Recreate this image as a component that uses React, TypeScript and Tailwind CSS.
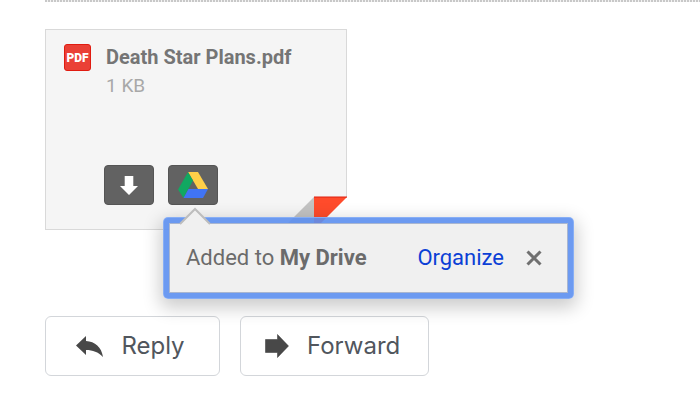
import React from 'react';

const PdfIcon = () => (
  <span className="flex size-[27px] shrink-0 items-center justify-center rounded-[3px] border border-[#e01b10] bg-[#ea4036] font-['Roboto',sans-serif] text-[12px] font-black leading-none text-white">
    PDF
  </span>
);

const DownloadIcon = () => (
  <svg viewBox="0 0 18 19" className="h-[19px] w-[18px]" fill="#fff" aria-hidden="true">
    <path d="M4.700 0h8.600v10H18l-9 9-9-9h4.700z" />
  </svg>
);

const DriveIcon = () => (
  <svg viewBox="0 0 30 26" className="h-[26px] w-[30px]" aria-hidden="true">
    <path d="M10 0h10l10 17H20z" fill="#ffcf48" />
    <path d="M10 0l5 8.500-9.500 17.500L0 17.500z" fill="#11a861" />
    <path d="M10.500 17H30l-5 9H5.500z" fill="#4074f5" />
  </svg>
);

const ReplyIcon = () => (
  <svg viewBox="0 0 27 21" className="h-[21px] w-[27px]" fill="#484848" aria-hidden="true">
    <path d="M0 9.500L10 0v5C19 5.500 25.500 11 27 21 22 16 17 14 10 14v5z" />
  </svg>
);

const ForwardIcon = () => (
  <svg viewBox="0 0 24 24" className="size-6" fill="#484848" stroke="#333" strokeWidth="0.500" aria-hidden="true">
    <path d="M.5 5.500h12V.5L23.500 12 12.500 23.500v-5H.5z" />
  </svg>
);

interface ActionButtonProps {
  label: string;
  icon: React.ReactNode;
}

const ActionButton: React.FC<ActionButtonProps> = ({ label, icon }) => (
  <button
    type="button"
    className="flex h-[60px] min-w-[175px] items-center justify-center gap-[18px] rounded-md border border-[#d3d6da] bg-white pl-6 pr-7 font-['Inter',sans-serif] text-2xl leading-7 text-[#51565d]"
  >
    {icon}
    {label}
  </button>
);

const DriveTooltip = () => (
  <div
    role="status"
    className="absolute left-[117px] top-[187px] w-[411px] rounded-[5px] border border-[#8fb3f6]/80 bg-[#5c8ff0]/90 p-[5px] shadow-[0_6px_18px_3px_rgba(0,0,0,0.2)]"
  >
    <div className="relative flex h-[70px] items-center border border-[#a9b6d0] bg-[#f0f0f0] pl-4 pr-[25px] text-[22px] leading-7 text-[#6b6b6b]">
      <svg viewBox="0 0 32 18" className="absolute -top-[17px] left-[9px] h-[18px] w-8" aria-hidden="true">
        <path d="M0 18L16 2l16 16z" fill="#f0f0f0" />
        <path d="M1 17L16 2l15 15" fill="none" stroke="#bdbdbd" strokeWidth="2" />
      </svg>
      <span>
        Added to <b className="font-bold">My Drive</b>
      </span>
      <a href="#organize" className="ml-auto text-[#0b3fd6]">
        Organize
      </a>
      <button type="button" aria-label="Close" className="ml-[22px]">
        <svg viewBox="0 0 16 16" className="size-4" stroke="#707070" strokeWidth="3" aria-hidden="true">
          <path d="M1.500 1.500l13 13M14.500 1.500l-13 13" />
        </svg>
      </button>
    </div>
  </div>
);

const AttachmentCard = () => (
  <section className="relative h-[201px] w-[302px] border border-[#d9d9d9] bg-[#f5f5f5] pl-[18px] pt-[13px]">
    <div className="flex gap-[15px]">
      <div className="pt-px">
        <PdfIcon />
      </div>
      <div>
        <h2 className="text-xl font-bold leading-7 text-[#757575]">Death Star Plans.pdf</h2>
        <p className="text-[19px] leading-[30px] text-[#a8a8a8]">1 KB</p>
      </div>
    </div>
    <div className="ml-10 mt-16 flex gap-[14px]">
      <button type="button" aria-label="Download" className="flex h-10 w-[50px] items-center justify-center rounded-[4px] border border-[#555] bg-[#626262]">
        <DownloadIcon />
      </button>
      <button type="button" aria-label="Add to Drive" className="flex h-10 w-[50px] items-center justify-center rounded-[4px] border border-[#555] bg-[#626262]">
        <DriveIcon />
      </button>
    </div>

    {/* folded corner */}
    <svg viewBox="0 0 66 34" className="absolute -bottom-px -right-px h-[34px] w-[66px]" aria-hidden="true">
      <path d="M66 1v33H33z" fill="#fff" />
      <path d="M33 1v33H0z" fill="#c3c3c3" />
      <path d="M33 1h33L33 34z" fill="#ff4b2b" />
      <path d="M33 1h33" stroke="#dd2010" />
    </svg>
    <DriveTooltip />
  </section>
);

export default function App() {
  return (
    <main className="min-h-screen bg-white pl-[45px] font-['Roboto',sans-serif]">
      <div className="h-0.5 bg-[repeating-linear-gradient(90deg,#c8c8c8_0_2px,#f3f3f3_2px_3px)]" />
      <div className="pt-[27px]">
        <AttachmentCard />
      </div>
      <div className="mt-[86px] flex gap-5">
        <ActionButton label="Reply" icon={<ReplyIcon />} />
        <ActionButton label="Forward" icon={<ForwardIcon />} />
      </div>
    </main>
  );
}
